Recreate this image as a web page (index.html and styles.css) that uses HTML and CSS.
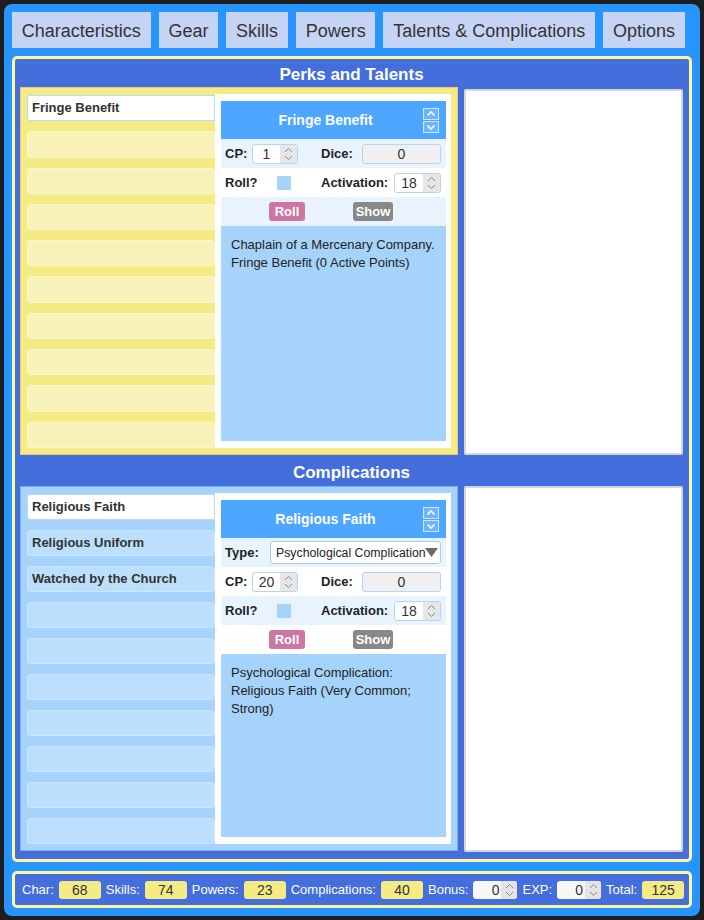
FILE: index.html
```html
<!DOCTYPE html>
<html>
<head>
<meta charset="utf-8">
<link rel="stylesheet" href="styles.css">
</head>
<body>
<div class="app">
  <nav class="tabs">
    <div class="tab">Characteristics</div>
    <div class="tab">Gear</div>
    <div class="tab">Skills</div>
    <div class="tab">Powers</div>
    <div class="tab">Talents &amp; Complications</div>
    <div class="tab">Options</div>
  </nav>
  <main class="main">
    <section class="section">
      <h2 class="section-title">Perks and Talents</h2>
      <div class="section-row row-perks">
        <div class="panel panel-perks">
          <div class="list">
            <div class="item selected">Fringe Benefit</div>
            <div class="item"></div>
            <div class="item"></div>
            <div class="item"></div>
            <div class="item"></div>
            <div class="item"></div>
            <div class="item"></div>
            <div class="item"></div>
            <div class="item"></div>
            <div class="item"></div>
          </div>
          <div class="detail">
            <div class="card">
              <div class="card-header">
                <span class="card-title">Fringe Benefit</span>
                <svg class="updown" width="16" height="25" viewBox="0 0 16 25"><rect x="0.5" y="0.5" width="15" height="11" fill="#6bb5ff" stroke="#cfe6ff"/><rect x="0.5" y="13.5" width="15" height="11" fill="#6bb5ff" stroke="#cfe6ff"/><path d="M4.5 7.5 L8 4 L11.5 7.5" fill="none" stroke="#fff" stroke-width="1.6"/><path d="M4.5 17.5 L8 21 L11.5 17.5" fill="none" stroke="#fff" stroke-width="1.6"/></svg>
              </div>
              <div class="card-row">
                <div class="cell-l"><span class="lbl lbl-cp">CP:</span><span class="num"><span class="num-val">1</span><span class="spin"><svg width="9" height="16" viewBox="0 0 9 16"><path d="M1 6 L4.5 2.5 L8 6" fill="none" stroke="#888" stroke-width="1"/><path d="M1 10 L4.5 13.5 L8 10" fill="none" stroke="#888" stroke-width="1"/></svg></span></span></div>
                <div class="cell-r"><span class="lbl">Dice:</span><span class="field dice">0</span></div>
              </div>
              <div class="card-row">
                <div class="cell-l"><span class="lbl lbl-roll">Roll?</span><span class="check"></span></div>
                <div class="cell-r"><span class="lbl">Activation:</span><span class="num num-act"><span class="num-val">18</span><span class="spin"><svg width="9" height="16" viewBox="0 0 9 16"><path d="M1 6 L4.5 2.5 L8 6" fill="none" stroke="#888" stroke-width="1"/><path d="M1 10 L4.5 13.5 L8 10" fill="none" stroke="#888" stroke-width="1"/></svg></span></span></div>
              </div>
              <div class="card-row buttons">
                <span class="btn btn-roll">Roll</span><span class="btn btn-show">Show</span>
              </div>
              <div class="card-desc">Chaplain of a Mercenary Company. Fringe Benefit (0 Active Points)</div>
            </div>
          </div>
        </div>
        <div class="notes notes-perks"></div>
      </div>
    </section>
    <section class="section">
      <h2 class="section-title title-comp">Complications</h2>
      <div class="section-row row-comp">
        <div class="panel panel-comp">
          <div class="list">
            <div class="item selected">Religious Faith</div>
            <div class="item">Religious Uniform</div>
            <div class="item">Watched by the Church</div>
            <div class="item"></div>
            <div class="item"></div>
            <div class="item"></div>
            <div class="item"></div>
            <div class="item"></div>
            <div class="item"></div>
            <div class="item"></div>
          </div>
          <div class="detail">
            <div class="card">
              <div class="card-header">
                <span class="card-title">Religious Faith</span>
                <svg class="updown" width="16" height="25" viewBox="0 0 16 25"><rect x="0.5" y="0.5" width="15" height="11" fill="#6bb5ff" stroke="#cfe6ff"/><rect x="0.5" y="13.5" width="15" height="11" fill="#6bb5ff" stroke="#cfe6ff"/><path d="M4.5 7.5 L8 4 L11.5 7.5" fill="none" stroke="#fff" stroke-width="1.6"/><path d="M4.5 17.5 L8 21 L11.5 17.5" fill="none" stroke="#fff" stroke-width="1.6"/></svg>
              </div>
              <div class="card-row">
                <span class="lbl lbl-type">Type:</span>
                <span class="select"><span class="select-val">Psychological Complication</span><svg class="tri" width="13" height="9" viewBox="0 0 13 9"><path d="M0 0 H13 L6.5 9 Z" fill="#6a6a6a"/></svg></span>
              </div>
              <div class="card-row">
                <div class="cell-l"><span class="lbl lbl-cp">CP:</span><span class="num"><span class="num-val">20</span><span class="spin"><svg width="9" height="16" viewBox="0 0 9 16"><path d="M1 6 L4.5 2.5 L8 6" fill="none" stroke="#888" stroke-width="1"/><path d="M1 10 L4.5 13.5 L8 10" fill="none" stroke="#888" stroke-width="1"/></svg></span></span></div>
                <div class="cell-r"><span class="lbl">Dice:</span><span class="field dice">0</span></div>
              </div>
              <div class="card-row">
                <div class="cell-l"><span class="lbl lbl-roll">Roll?</span><span class="check"></span></div>
                <div class="cell-r"><span class="lbl">Activation:</span><span class="num num-act"><span class="num-val">18</span><span class="spin"><svg width="9" height="16" viewBox="0 0 9 16"><path d="M1 6 L4.5 2.5 L8 6" fill="none" stroke="#888" stroke-width="1"/><path d="M1 10 L4.5 13.5 L8 10" fill="none" stroke="#888" stroke-width="1"/></svg></span></span></div>
              </div>
              <div class="card-row buttons">
                <span class="btn btn-roll">Roll</span><span class="btn btn-show">Show</span>
              </div>
              <div class="card-desc">Psychological Complication: Religious Faith (Very Common; Strong)</div>
            </div>
          </div>
        </div>
        <div class="notes notes-comp"></div>
      </div>
    </section>
  </main>
  <footer class="totals">
    <span class="t-lbl">Char:</span><span class="val">68</span>
    <span class="t-lbl">Skills:</span><span class="val">74</span>
    <span class="t-lbl">Powers:</span><span class="val">23</span>
    <span class="t-lbl">Complications:</span><span class="val">40</span>
    <span class="t-lbl">Bonus:</span><span class="tnum"><span class="tnum-val">0</span><span class="spin tspin"><svg width="9" height="16" viewBox="0 0 9 16"><path d="M1 6 L4.5 2.5 L8 6" fill="none" stroke="#888" stroke-width="1"/><path d="M1 10 L4.5 13.5 L8 10" fill="none" stroke="#888" stroke-width="1"/></svg></span></span>
    <span class="t-lbl">EXP:</span><span class="tnum"><span class="tnum-val">0</span><span class="spin tspin"><svg width="9" height="16" viewBox="0 0 9 16"><path d="M1 6 L4.5 2.5 L8 6" fill="none" stroke="#888" stroke-width="1"/><path d="M1 10 L4.5 13.5 L8 10" fill="none" stroke="#888" stroke-width="1"/></svg></span></span>
    <span class="t-lbl">Total:</span><span class="val">125</span>
  </footer>
</div>
</body>
</html>
```
FILE: styles.css
```css
* { box-sizing: border-box; }
html, body { margin: 0; padding: 0; }
body {
  background: #1e1e1e;
  font-family: "Liberation Sans", Arial, Helvetica, sans-serif;
  width: 704px;
  height: 920px;
  overflow: hidden;
}
.app {
  margin: 4px;
  width: 696px;
  height: 912px;
  background: #2894ff;
  border-radius: 8px;
  padding: 8px 0 0 8px;
}
.tabs {
  display: flex;
  gap: 8px;
  height: 36px;
}
.tab {
  background: #c5d4f4;
  color: #333;
  font-size: 18px;
  height: 36px;
  line-height: 38px;
  padding: 0 9.8px;
  white-space: nowrap;
}
.main {
  margin-top: 8px;
  width: 680px;
  height: 806px;
  background: #436edb;
  border: 3px solid #fdf59c;
  border-radius: 5px;
  padding: 0 6px 0 5px;
}
.section-title {
  margin: 0;
  height: 28px;
  line-height: 32px;
  text-align: center;
  color: #fff;
  font-size: 17px;
  font-weight: bold;
}
.title-comp { margin-top: 2px; height: 29px; }
.section-row {
  display: flex;
  gap: 6px;
}
.row-perks { height: 368px; }
.row-comp { height: 365px; }
.panel {
  width: 438px;
  flex: none;
  height: 100%;
  display: flex;
  padding: 6px;
}
.panel-perks {
  background: #f5eb84;
  border: 1px solid #ecc86a;
}
.panel-comp {
  background: #a6d3fb;
  border: 1px solid #74b6ec;
}
.list {
  width: 188px;
  flex: none;
  display: grid;
  grid-template-rows: repeat(10, 1fr);
  row-gap: 10px;
  padding-top: 1px;
}
.item {
  border-radius: 3px;
  font-size: 13px;
  font-weight: bold;
  color: #333;
  padding-left: 4px;
  line-height: 24px;
  white-space: nowrap;
  overflow: hidden;
}
.panel-perks .item {
  background: #f8f2b8;
  border: 1px solid #fbf6cd;
}
.panel-comp .item {
  background: #bbdffc;
  border: 1px solid #cde7fd;
}
.panel .item.selected {
  background: #fff;
  border: 1px solid #b6d9f6;
  border-radius: 3px 0 0 3px;
}
.detail {
  flex: 1;
  min-width: 0;
  background: #fff;
  padding: 7px 5px 7px 6px;
}
.card {
  height: 100%;
  display: flex;
  flex-direction: column;
}
.card-header {
  height: 38px;
  flex: none;
  background: #4da6ff;
  display: flex;
  align-items: center;
  padding: 0 7px 0 7px;
}
.card-title {
  flex: 1;
  text-align: center;
  color: #fff;
  font-size: 14px;
  font-weight: bold;
}
.updown { flex: none; display: block; }
.card-row {
  height: 29px;
  flex: none;
  display: flex;
  align-items: center;
  padding: 0 5px 0 4px;
  background: #fff;
}
.card-row:nth-child(even) { background: #e8f3fe; }
.cell-l {
  width: 96px;
  flex: none;
  display: flex;
  align-items: center;
}
.cell-r {
  flex: 1;
  display: flex;
  align-items: center;
}
.lbl {
  font-size: 13px;
  font-weight: bold;
  color: #222;
  white-space: nowrap;
}
.lbl-cp { width: 27px; }
.lbl-roll { width: 52px; }
.lbl-type { width: 45px; flex: none; }
.num {
  width: 46px;
  height: 20px;
  border: 1px solid #b4d6f4;
  border-radius: 3px;
  display: flex;
  background: #fff;
  overflow: hidden;
}
.num-val {
  flex: 1;
  text-align: center;
  font-size: 14px;
  line-height: 18px;
  color: #333;
}
.spin {
  width: 17px;
  background: #e6e6e6;
  display: flex;
  align-items: center;
  justify-content: center;
}
.spin svg { display: block; }
.num-act { margin-left: auto; width: 47px; }
.field {
  margin-left: auto;
  height: 20px;
  border: 1px solid #b4d6f4;
  border-radius: 3px;
  background: #f0f0f0;
  text-align: center;
  font-size: 14px;
  line-height: 18px;
  color: #333;
}
.dice { width: 79px; }
.check {
  width: 14px;
  height: 14px;
  background: #a6d3fb;
}
.select {
  flex: 1;
  min-width: 0;
  height: 23px;
  border: 1px solid #a9cbef;
  border-radius: 3px;
  background: #fff;
  display: flex;
  align-items: center;
  padding: 0 2px 0 5px;
}
.select-val {
  flex: 1;
  min-width: 0;
  font-size: 12.3px;
  color: #222;
  white-space: nowrap;
}
.tri { display: block; flex: none; }
.buttons {
  padding-left: 48px;
  gap: 48px;
}
.btn {
  height: 19px;
  line-height: 19px;
  border-radius: 3px;
  color: #fff;
  font-size: 13px;
  font-weight: bold;
  text-align: center;
}
.btn-roll { width: 36px; background: #cc76a1; }
.btn-show { width: 40px; background: #888; }
.card-desc {
  flex: 1;
  background: #a6d3fb;
  padding: 10px 6px 10px 10px;
  font-size: 13px;
  line-height: 18px;
  color: #222;
}
.notes {
  flex: 1;
  background: #fff;
  border: 2px solid #d6d6d6;
  border-radius: 2px;
}
.notes-perks { margin-top: 2px; }
.notes-comp { height: 366px; }
.totals {
  margin-top: 9px;
  width: 680px;
  height: 37px;
  border: 3px solid #fdf59c;
  border-radius: 5px;
  background: #436edb;
  display: flex;
  align-items: center;
  gap: 5px;
  padding-left: 7px;
}
.t-lbl {
  color: #fff;
  font-size: 13px;
  white-space: nowrap;
}
.val {
  width: 42px;
  height: 18px;
  line-height: 19px;
  background: #f5eb84;
  border-radius: 3px;
  color: #333;
  font-size: 14px;
  text-align: center;
}
.tnum {
  width: 44px;
  height: 18px;
  background: #f7f7f7;
  border-radius: 3px;
  display: flex;
  overflow: hidden;
}
.tnum-val {
  flex: 1;
  text-align: right;
  padding-right: 2px;
  font-size: 14px;
  line-height: 19px;
  color: #333;
}
.tspin { width: 16px; background: #e4e4e4; }
```
